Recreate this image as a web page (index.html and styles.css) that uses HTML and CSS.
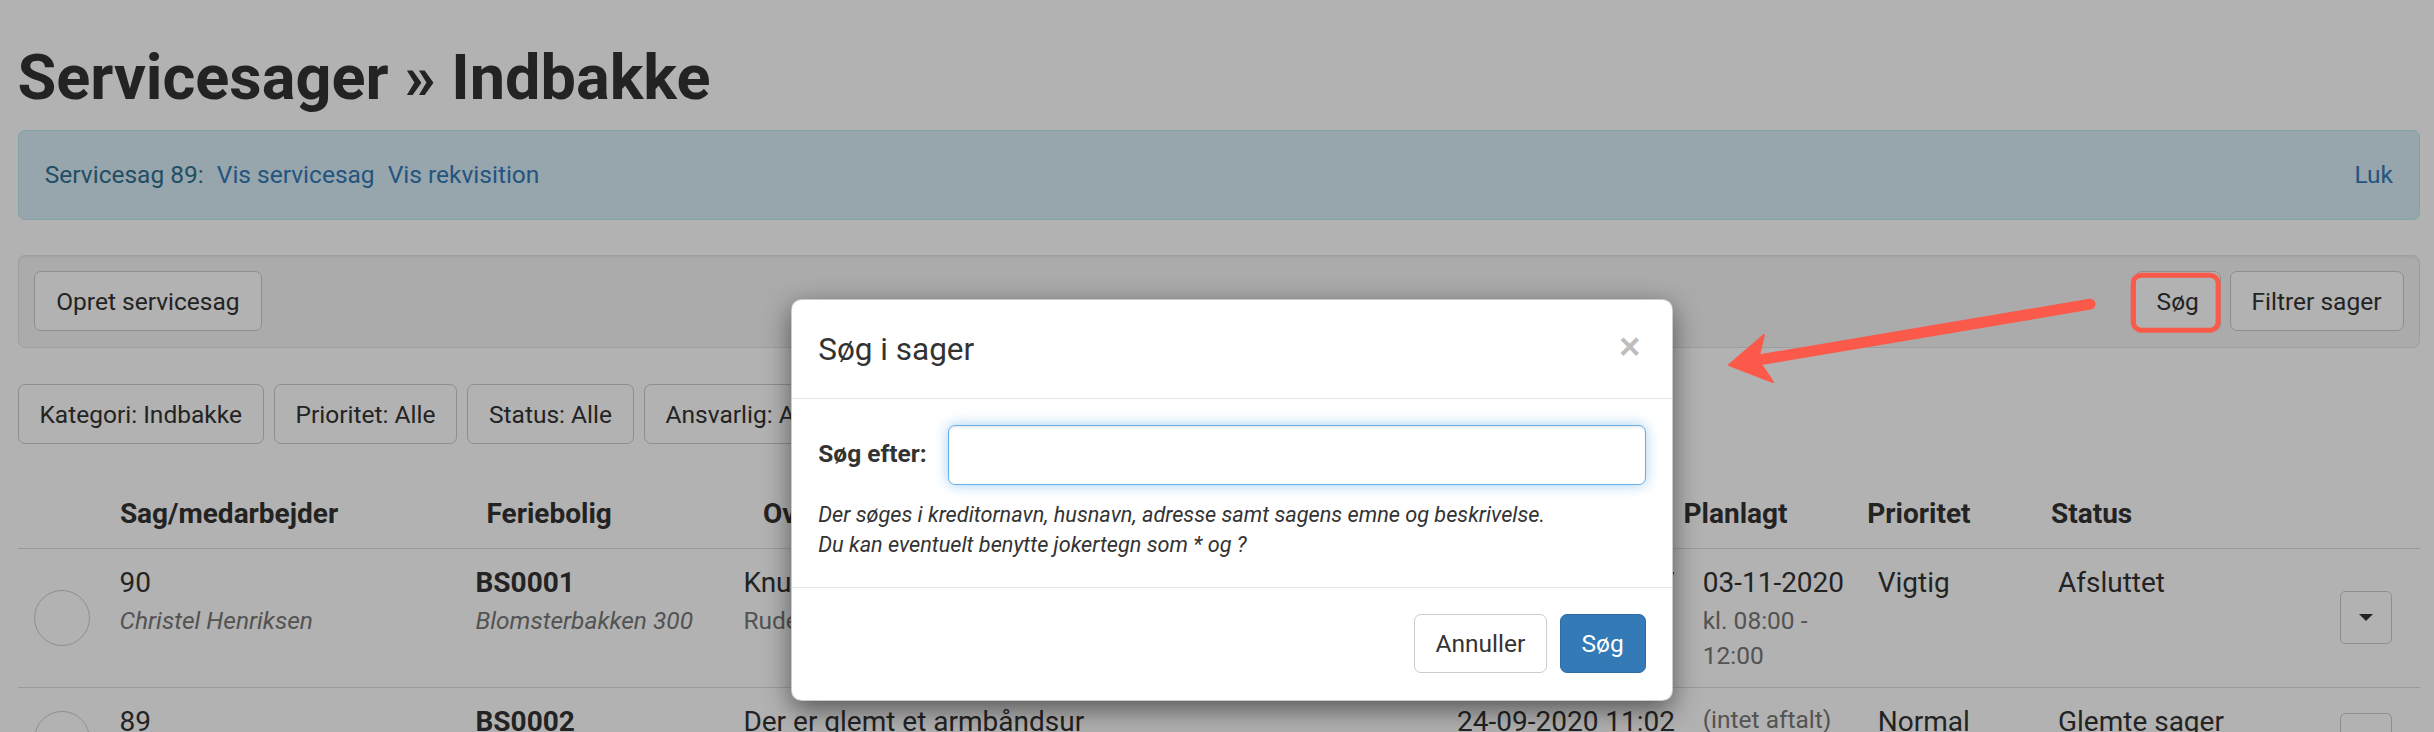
FILE: index.html
```html
<!DOCTYPE html>
<html lang="da">
<head>
<meta charset="utf-8">
<title>Servicesager » Indbakke</title>
<link rel="stylesheet" href="styles.css">
</head>
<body>
<div class="page">
  <h1 class="title">Servicesager » Indbakke</h1>

  <div class="alert">
    <div class="alert-text">Servicesag 89: <a href="#" class="lnk">Vis servicesag</a> <a href="#" class="lnk">Vis rekvisition</a></div>
    <a href="#" class="lnk-plain">Luk</a>
  </div>

  <div class="well">
    <button class="btn">Opret servicesag</button>
    <div class="well-right">
      <button class="btn">Søg</button>
      <button class="btn">Filtrer sager</button>
    </div>
  </div>

  <div class="filters">
    <button class="btn">Kategori: Indbakke</button>
    <button class="btn">Prioritet: Alle</button>
    <button class="btn">Status: Alle</button>
    <button class="btn">Ansvarlig: Alle</button>
    <button class="btn">Feriebolig: Alle</button>
  </div>

  <div class="table">
    <div class="thead">
      <div class="th"></div>
      <div class="th">Sag/medarbejder</div>
      <div class="th">Feriebolig</div>
      <div class="th">Overskrift</div>
      <div class="th">Oprettet</div>
      <div class="th">Planlagt</div>
      <div class="th">Prioritet</div>
      <div class="th">Status</div>
    </div>

    <div class="trow">
      <div class="td td-mid"><span class="circle"></span></div>
      <div class="td"><span class="main">90</span><span class="sub it">Christel Henriksen</span></div>
      <div class="td"><span class="main bold">BS0001</span><span class="sub it">Blomsterbakken 300</span></div>
      <div class="td"><span class="main">Knust rude i stuen</span><span class="sub">Rude skal udskiftes</span></div>
      <div class="td nowrap"><span class="main">02-11-2020 14:37</span></div>
      <div class="td"><span class="main">03-11-2020</span><span class="sub">kl. 08:00 -<br>12:00</span></div>
      <div class="td"><span class="main">Vigtig</span></div>
      <div class="td"><span class="main">Afsluttet</span></div>
      <div class="td td-mid td-btn"><button class="caret-btn"><span class="caret"></span></button></div>
    </div>

    <div class="trow">
      <div class="td td-mid"><span class="circle"></span></div>
      <div class="td"><span class="main">89</span><span class="sub it">Christel Henriksen</span></div>
      <div class="td"><span class="main bold">BS0002</span><span class="sub it">Strandvejen 12</span></div>
      <div class="td"><span class="main">Der er glemt et armbåndsur</span><span class="sub">Gæsten har glemt et ur</span></div>
      <div class="td nowrap"><span class="main">24-09-2020 11:02</span></div>
      <div class="td"><span class="sub">(intet aftalt)</span></div>
      <div class="td"><span class="main">Normal</span></div>
      <div class="td"><span class="main">Glemte sager</span></div>
      <div class="td td-mid td-btn"><button class="caret-btn"><span class="caret"></span></button></div>
    </div>
  </div>

  <div class="backdrop"></div>

  <div class="modal">
    <div class="modal-header">
      <h4 class="modal-title">Søg i sager</h4>
      <button class="close">×</button>
    </div>
    <div class="modal-body">
      <div class="form-row">
        <label class="lbl">Søg efter:</label>
        <input class="input" type="text">
      </div>
      <p class="help">Der søges i kreditornavn, husnavn, adresse samt sagens emne og beskrivelse.<br>Du kan eventuelt benytte jokertegn som * og ?</p>
    </div>
    <div class="modal-footer">
      <button class="btn">Annuller</button>
      <button class="btn btn-primary">Søg</button>
    </div>
  </div>
</div>

<svg class="annot" viewBox="0 0 2434 732" xmlns="http://www.w3.org/2000/svg">
  <rect x="2133.2" y="275.2" width="84.9" height="55" rx="8" ry="8" fill="none" stroke="#fb5a4b" stroke-width="5"/>
  <line x1="2090" y1="304.2" x2="1762" y2="359.4" stroke="#fb5a4b" stroke-width="11" stroke-linecap="round"/>
  <polygon points="1729,365 1764,335 1758,359.8 1773,382" fill="#fb5a4b" stroke="#fb5a4b" stroke-width="2" stroke-linejoin="round"/>
</svg>
</body>
</html>
```

FILE: styles.css
```css
* { box-sizing: border-box; }

html, body {
  margin: 0;
  padding: 0;
  background: #fff;
}

body {
  position: relative;
  width: 2434px;
  height: 732px;
  overflow: hidden;
}

.page {
  zoom: 1.75;
  position: relative;
  height: 418.29px;
  overflow: hidden;
  padding: 0 7.86px 0 10px;
  font-family: Roboto, "Liberation Sans", Arial, sans-serif;
  font-size: 14px;
  line-height: 1.42857;
  color: #333;
}

.title {
  margin: 24.7px 0 10px;
  font-size: 36px;
  font-weight: 700;
  line-height: 1.1;
  color: #333;
}

.alert {
  display: flex;
  justify-content: space-between;
  align-items: center;
  padding: 15px;
  margin-bottom: 20px;
  border: 1px solid #bce8f1;
  border-radius: 4px;
  background: #d9edf7;
  color: #31708f;
  line-height: 20px;
}

.lnk, .lnk-plain {
  color: #337ab7;
  text-decoration: none;
}

.lnk { margin-left: 4px; }

.well {
  display: flex;
  justify-content: space-between;
  align-items: center;
  padding: 9px;
  margin-bottom: 21px;
  border: 1px solid #e3e3e3;
  border-radius: 4px;
  background: #f5f5f5;
  box-shadow: inset 0 1px 1px rgba(0, 0, 0, 0.05);
}

.well-right {
  display: flex;
  gap: 5px;
}

.btn {
  display: inline-block;
  height: 34px;
  padding: 6px 12px;
  font-family: inherit;
  font-size: 14px;
  line-height: 20px;
  color: #333;
  background: #fff;
  border: 1px solid #ccc;
  border-radius: 4px;
  white-space: nowrap;
  cursor: pointer;
}

.btn-primary {
  color: #fff;
  background: #337ab7;
  border-color: #2e6da4;
}

.filters {
  display: flex;
  gap: 5.5px;
  margin-bottom: 20.5px;
}

/* table */
.thead, .trow {
  display: grid;
  border-bottom: 1px solid #ddd;
}

.thead {
  grid-template-columns: 50.5px 209.5px 158px 397px 129px 105px 105px 1fr;
}

.trow {
  grid-template-columns: 50.3px 203.4px 153.1px 407.8px 140.4px 100px 103px 1fr auto;
}

.th {
  padding: 8px;
  font-size: 16px;
  font-weight: 700;
  line-height: 22.86px;
  white-space: nowrap;
}

.td {
  padding: 8px;
  display: flex;
  flex-direction: column;
  align-items: flex-start;
}

.td-mid {
  align-self: center;
  align-items: center;
}

.td-btn {
  padding-right: 16px;
}

.nowrap { white-space: nowrap; }

.main {
  display: block;
  font-size: 16px;
  line-height: 22.86px;
  color: #333;
  white-space: nowrap;
}

.bold { font-weight: 700; }

.sub {
  display: block;
  font-size: 14px;
  line-height: 20px;
  color: #777;
  white-space: nowrap;
}

.it { font-style: italic; }

.circle {
  display: block;
  width: 32px;
  height: 32px;
  border: 1px solid #ccc;
  border-radius: 50%;
  background: #fff;
}

.caret-btn {
  display: flex;
  align-items: center;
  justify-content: center;
  width: 30px;
  height: 30px;
  padding: 0;
  background: #fff;
  border: 1px solid #ccc;
  border-radius: 3px;
}

.caret {
  width: 0;
  height: 0;
  border-top: 4px solid #333;
  border-left: 4px solid transparent;
  border-right: 4px solid transparent;
}

/* modal */
.backdrop {
  position: absolute;
  inset: 0;
  background: rgba(0, 0, 0, 0.3);
}

.modal {
  position: absolute;
  left: 452px;
  top: 171px;
  width: 504px;
  background: #fff;
  border: 1px solid rgba(0, 0, 0, 0.2);
  border-radius: 6px;
  box-shadow: 0 5px 15px rgba(0, 0, 0, 0.5);
}

.modal-header {
  display: flex;
  justify-content: space-between;
  align-items: center;
  padding: 15px;
  border-bottom: 1px solid #e5e5e5;
}

.modal-title {
  margin: 0;
  font-size: 18px;
  font-weight: 400;
  line-height: 25.71px;
  color: #333;
}

.close {
  margin: -2px 3px 0 0;
  padding: 0;
  border: 0;
  background: transparent;
  font-family: "Liberation Sans", Arial, sans-serif;
  font-size: 21px;
  font-weight: 700;
  line-height: 1;
  color: #000;
  opacity: 0.25;
}

.modal-body {
  padding: 15px;
}

.form-row {
  display: flex;
  align-items: center;
}

.lbl {
  flex: 0 0 74px;
  font-weight: 700;
}

.input {
  flex: 1;
  height: 34px;
  padding: 6px 12px;
  font-family: inherit;
  font-size: 14px;
  border: 1px solid #66afe9;
  border-radius: 4px;
  outline: 0;
  box-shadow: inset 0 1px 1px rgba(0, 0, 0, 0.075), 0 0 8px rgba(102, 175, 233, 0.6);
}

.help {
  margin: 9px 0 0;
  font-size: 12.4px;
  font-style: italic;
  line-height: 17.14px;
  color: #333;
}

.modal-footer {
  display: flex;
  justify-content: flex-end;
  gap: 7px;
  padding: 15px;
  border-top: 1px solid #e5e5e5;
}

.annot {
  position: absolute;
  left: 0;
  top: 0;
  width: 2434px;
  height: 732px;
  pointer-events: none;
}
```
